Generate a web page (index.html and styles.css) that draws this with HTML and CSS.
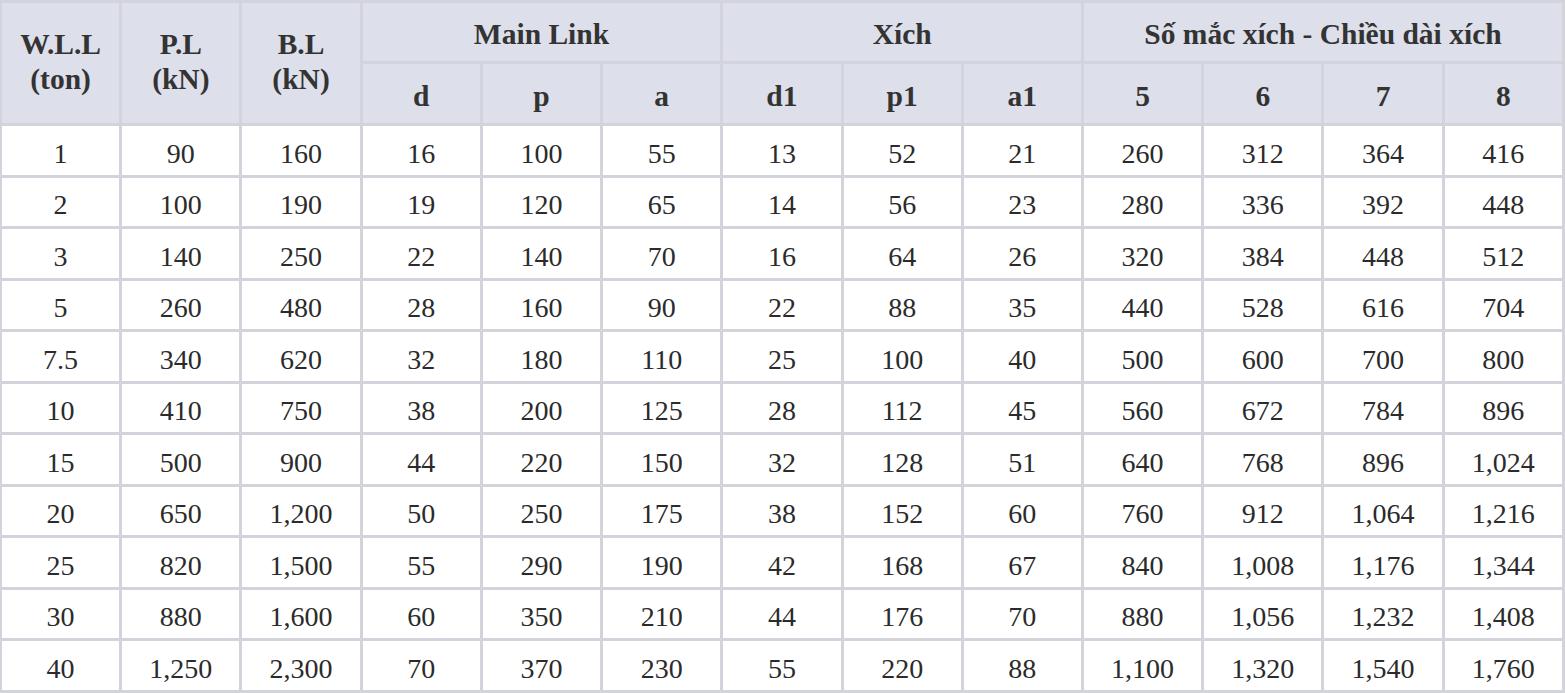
FILE: index.html
```html
<!DOCTYPE html>
<html>
<head>
<meta charset="utf-8">
<link rel="stylesheet" href="styles.css">
</head>
<body>
<table class="spec">
  <colgroup>
    <col><col><col><col><col><col><col><col><col><col><col><col><col>
  </colgroup>
  <thead>
    <tr class="h1">
      <th class="tall" rowspan="2">W.L.L<br>(ton)</th>
      <th class="tall" rowspan="2">P.L<br>(kN)</th>
      <th class="tall" rowspan="2">B.L<br>(kN)</th>
      <th colspan="3">Main Link</th>
      <th colspan="3">Xích</th>
      <th colspan="4">Số mắc xích - Chiều dài xích</th>
    </tr>
    <tr class="h2">
      <th>d</th><th>p</th><th>a</th>
      <th>d1</th><th>p1</th><th>a1</th>
      <th>5</th><th>6</th><th>7</th><th>8</th>
    </tr>
  </thead>
  <tbody>
    <tr><td>1</td><td>90</td><td>160</td><td>16</td><td>100</td><td>55</td><td>13</td><td>52</td><td>21</td><td>260</td><td>312</td><td>364</td><td>416</td></tr>
    <tr><td>2</td><td>100</td><td>190</td><td>19</td><td>120</td><td>65</td><td>14</td><td>56</td><td>23</td><td>280</td><td>336</td><td>392</td><td>448</td></tr>
    <tr><td>3</td><td>140</td><td>250</td><td>22</td><td>140</td><td>70</td><td>16</td><td>64</td><td>26</td><td>320</td><td>384</td><td>448</td><td>512</td></tr>
    <tr><td>5</td><td>260</td><td>480</td><td>28</td><td>160</td><td>90</td><td>22</td><td>88</td><td>35</td><td>440</td><td>528</td><td>616</td><td>704</td></tr>
    <tr><td>7.5</td><td>340</td><td>620</td><td>32</td><td>180</td><td>110</td><td>25</td><td>100</td><td>40</td><td>500</td><td>600</td><td>700</td><td>800</td></tr>
    <tr><td>10</td><td>410</td><td>750</td><td>38</td><td>200</td><td>125</td><td>28</td><td>112</td><td>45</td><td>560</td><td>672</td><td>784</td><td>896</td></tr>
    <tr><td>15</td><td>500</td><td>900</td><td>44</td><td>220</td><td>150</td><td>32</td><td>128</td><td>51</td><td>640</td><td>768</td><td>896</td><td>1,024</td></tr>
    <tr><td>20</td><td>650</td><td>1,200</td><td>50</td><td>250</td><td>175</td><td>38</td><td>152</td><td>60</td><td>760</td><td>912</td><td>1,064</td><td>1,216</td></tr>
    <tr><td>25</td><td>820</td><td>1,500</td><td>55</td><td>290</td><td>190</td><td>42</td><td>168</td><td>67</td><td>840</td><td>1,008</td><td>1,176</td><td>1,344</td></tr>
    <tr><td>30</td><td>880</td><td>1,600</td><td>60</td><td>350</td><td>210</td><td>44</td><td>176</td><td>70</td><td>880</td><td>1,056</td><td>1,232</td><td>1,408</td></tr>
    <tr><td>40</td><td>1,250</td><td>2,300</td><td>70</td><td>370</td><td>230</td><td>55</td><td>220</td><td>88</td><td>1,100</td><td>1,320</td><td>1,540</td><td>1,760</td></tr>
  </tbody>
</table>
</body>
</html>
```
FILE: styles.css
```css
html, body {
  margin: 0;
  padding: 0;
  background: #ffffff;
}
body {
  font-family: "Liberation Serif", "DejaVu Serif", serif;
  color: #333333;
}
.spec {
  width: 1566px;
  margin: 0 0 0 -1px;
  border-collapse: collapse;
  table-layout: fixed;
}
.spec th, .spec td {
  font-family: "Liberation Serif", "DejaVu Serif", serif;
  border: 3px solid #d3d4db;
  text-align: center;
  vertical-align: middle;
  padding: 0;
}
.spec th {
  background: #dddfea;
  font-weight: bold;
  font-size: 29.5px;
  line-height: 35px;
  color: #333333;
  padding-top: 6px;
}
.spec .h1 {
  height: 61px;
}
.spec .h1 th {
  padding-top: 4px;
}
.spec .h1 th.tall {
  padding-top: 0;
  padding-bottom: 2px;
}
.spec .h2 {
  height: 62px;
}
.spec td {
  font-size: 28px;
  line-height: 30px;
  color: #2b2b2b;
  padding-top: 7px;
}
.spec tbody tr {
  height: 51.5px;
}
```
